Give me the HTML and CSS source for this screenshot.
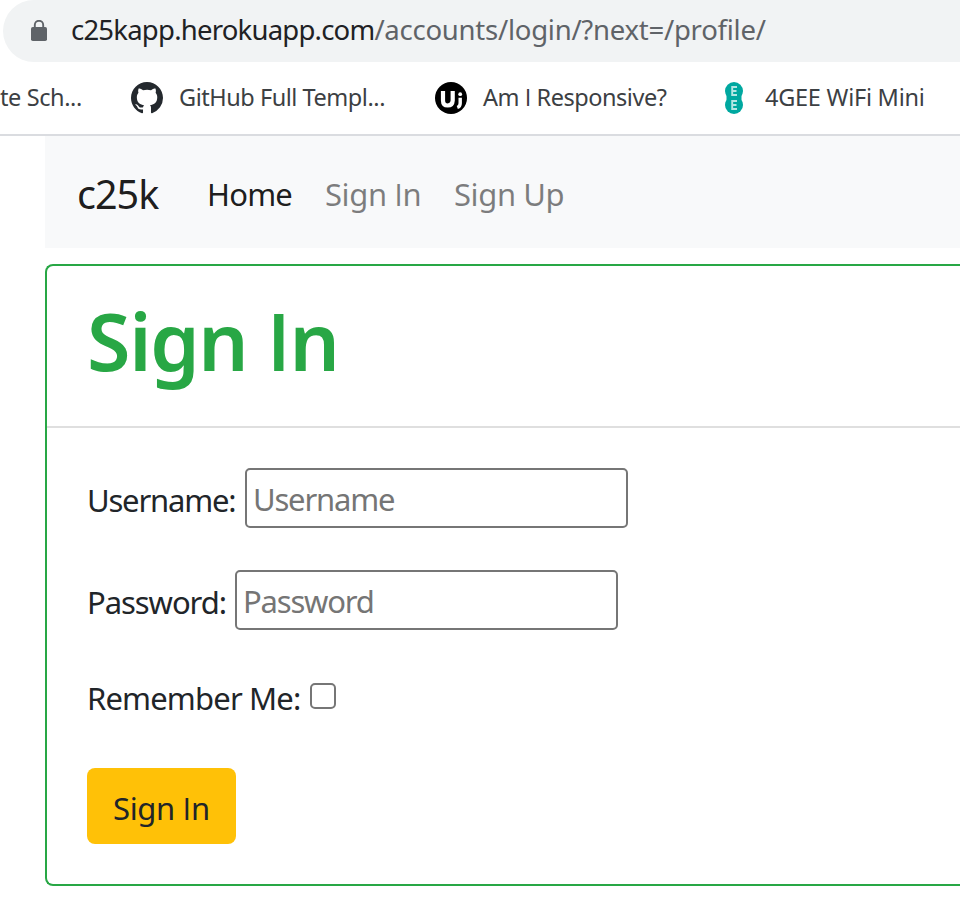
FILE: index.html
```html
<!DOCTYPE html>
<html lang="en">
<head>
<meta charset="utf-8">
<title>c25k</title>
<link rel="stylesheet" href="styles.css">
</head>
<body>
<header class="browser">
  <div class="omnibox">
    <svg class="lock" viewBox="0 0 16 22" width="16" height="22"><path d="M3.800 9V5a4.200 4.200 0 0 1 8.400 0V9" fill="none" stroke="#5f6368" stroke-width="1.900"/><rect y="7" width="16" height="14" rx="1.800" fill="#5f6368"/></svg>
    <span class="url"><span class="host">c25kapp.herokuapp.com</span><span class="path">/accounts/login/?next=/profile/</span></span>
  </div>
  <nav class="bookmarks">
    <span class="bookmark b1">te Sch...</span>
    <svg class="icon" viewBox="0 0 16 16" width="32" height="32"><path fill="#24292e" d="M8 0C3.580 0 0 3.580 0 8c0 3.540 2.290 6.530 5.470 7.590.4.070.55-.17.55-.38 0-.19-.01-.82-.01-1.490-2.010.37-2.530-.49-2.690-.94-.09-.23-.48-.94-.82-1.130-.28-.15-.68-.52-.01-.53.63-.01 1.080.58 1.230.82.72 1.210 1.870.87 2.330.66.07-.52.28-.87.51-1.070-1.780-.2-3.640-.89-3.640-3.950 0-.87.31-1.590.82-2.150-.08-.2-.36-1.020.08-2.120 0 0 .67-.21 2.200.82.64-.18 1.320-.27 2-.27s1.360.09 2 .27c1.530-1.040 2.200-.82 2.200-.82.44 1.100.16 1.920.08 2.120.51.56.82 1.270.82 2.150 0 3.070-1.870 3.750-3.650 3.950.29.25.54.73.54 1.480 0 1.070-.01 1.930-.01 2.200 0 .21.15.46.55.38A8.010 8.010 0 0 0 16 8c0-4.420-3.580-8-8-8z"/></svg>
    <span class="bookmark b2">GitHub Full Templ...</span>
    <svg class="icon" viewBox="0 0 32 32" width="32" height="32"><circle cx="16" cy="16" r="16"/><path d="M8 9v9.500q0 5 4.700 5t5-5V9" fill="none" stroke="#fff" stroke-width="4.200"/><path d="M25.200 15.800v5.500q0 3.200-2.900 4.200" fill="none" stroke="#fff" stroke-width="3.400"/><circle cx="25.200" cy="12.200" r="1.900" fill="#fff"/></svg>
    <span class="bookmark b3">Am <span class="cap">I</span> Responsive?</span>
    <svg class="icon" viewBox="0 0 18 32" width="18" height="32"><g fill="#00a8a0"><circle cx="9" cy="9" r="9"/><circle cx="9" cy="23" r="9"/><path d="M1.500 12h15v8h-15z"/></g><path d="M12 5H7.200v8H12M7.200 9h4.300M12 19H7.200v8H12M7.200 23h4.300" fill="none" stroke="#b5e6e3" stroke-width="1.900"/></svg>
    <span class="bookmark b4">4GEE WiFi Mini</span>
  </nav>
</header>
<main class="page">
  <nav class="navbar">
    <a class="brand">c25k</a>
    <a class="link home">Home</a>
    <a class="link signin">Sign <span class="cap">I</span>n</a>
    <a class="link signup">Sign Up</a>
  </nav>
  <section class="card">
    <div class="card-header"><h1>Sign <span class="cap">I</span>n</h1></div>
    <form class="card-body">
      <div class="field user"><label for="u">Username:</label><input class="text" id="u" type="text" placeholder="Username"></div>
      <div class="field pass"><label for="p">Password:</label><input class="text" id="p" type="password" placeholder="Password"></div>
      <div class="field remember"><label for="r">Remember Me:</label><input class="check" id="r" type="checkbox"></div>
      <button class="btn" type="button">Sign <span class="cap">I</span>n</button>
    </form>
  </section>
</main>
</body>
</html>
```
FILE: styles.css
```css
* { box-sizing: border-box; }
body { margin: 0; width: 960px; height: 906px; overflow: hidden; background: #fff; color: #212529; font-family: "Noto Sans", "Open Sans", sans-serif; font-size: 31px; line-height: 48px; }
svg { display: block; flex: none; }
.cap { font-family: "Open Sans", sans-serif; }

.browser { height: 136px; border-bottom: 2px solid #dadce0; }
.omnibox { height: 62px; margin-left: 3px; padding-left: 28px; display: flex; align-items: center; background: #f1f3f4; border-radius: 31px 0 0 31px; }
.url { margin-left: 24px; padding-bottom: 3px; font-size: 27.500px; white-space: nowrap; color: #202124; }
.host { letter-spacing: -.78px; }
.path { color: #5f6368; letter-spacing: -.25px; }
.bookmarks { height: 72px; display: flex; align-items: center; font-size: 23.500px; color: #3c4043; white-space: nowrap; letter-spacing: -.46px; }
.bookmark { flex: none; padding-bottom: 2px; }
.b1 { width: 131px; letter-spacing: -.4px; }
.b2 { width: 256px; margin-left: 16px; }
.b3 { width: 242px; margin-left: 16px; }
.b4 { margin-left: 22px; letter-spacing: -.25px; }

.page { margin-left: 45px; }
.navbar { height: 112px; padding: 3px 32px 0; display: flex; align-items: center; background: #f8f9fa; white-space: nowrap; }
.brand { width: 130px; padding-top: 1px; font-size: 39.500px; color: rgba(0,0,0,.9); letter-spacing: -1px; }
.link { color: rgba(0,0,0,.5); letter-spacing: -.4px; }
.home { width: 118px; color: rgba(0,0,0,.9); letter-spacing: -.8px; }
.signin { width: 129px; }

.card { height: 622px; margin-top: 16px; border: 2px solid #28a745; border-right: 0; border-radius: 8px 0 0 8px; }
.card-header { height: 162px; padding: 21px 40px 0; border-bottom: 2px solid #dfdfdf; }
h1 { margin: 0; font-size: 79px; line-height: 108px; font-weight: 600; color: #28a745; letter-spacing: -1.300px; }
.card-body { padding: 40px; }
.field { display: flex; align-items: center; white-space: nowrap; }
.user { height: 60px; }
.pass { height: 60px; margin-top: 42px; }
.remember { height: 48px; margin-top: 44px; }
.user label { width: 158px; padding-top: 3px; letter-spacing: -1.200px; }
.pass label { width: 148px; padding-top: 3px; letter-spacing: -1.060px; }
.remember label { width: 223px; padding-bottom: 1px; letter-spacing: -.84px; }
.text { width: 383px; height: 60px; margin: 0; padding: 4px 6px 2px; border: 2px solid #767676; border-radius: 5px; font: inherit; letter-spacing: -1.200px; background: #fff; }
.text::placeholder { color: #757575; }
.check { appearance: none; width: 26px; height: 26px; margin: 0 0 4px; border: 2px solid #767676; border-radius: 5px; background: #fff; }
.btn { display: block; width: 149px; height: 76px; margin-top: 46px; padding: 3px 26px 0; border: 0; border-radius: 8px; background: #ffc107; color: #212529; font: inherit; letter-spacing: -.35px; text-align: left; white-space: nowrap; }
```
